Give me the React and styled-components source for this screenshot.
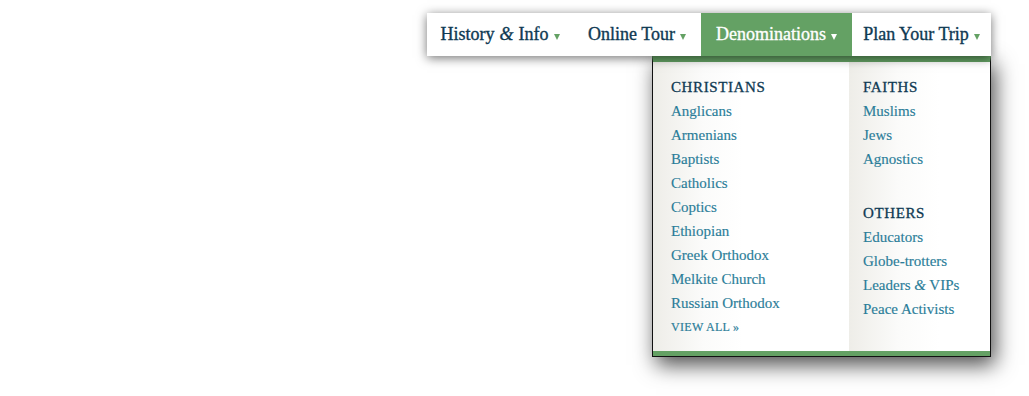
import React from "react";
import styled, { createGlobalStyle } from "styled-components";

const Global = createGlobalStyle`
  html, body { margin: 0; padding: 0; background: #fff; }
  body { font-family: "Liberation Serif", "DejaVu Serif", serif; }
  * { box-sizing: border-box; }
`;

const GREEN = "#64a164";
const NAVY = "#0f3a53";
const TEAL = "#2b7d99";

const Page = styled.div`
  display: flex;
  justify-content: flex-end;
  padding: 13px 38px 0 0;
  height: 396px;
`;

const MenuWrap = styled.div`
  position: relative;
  width: 564px;
`;

const Nav = styled.nav`
  position: relative;
  z-index: 2;
  display: flex;
  height: 43px;
  background: #fff;
  box-shadow: 0 2px 10px rgba(0, 0, 0, 0.55);
`;

const NavItem = styled.a`
  display: flex;
  align-items: center;
  justify-content: center;
  gap: 5px;
  width: ${(p) => p.$w}px;
  height: 100%;
  font-size: 18px;
  -webkit-text-stroke: 0.35px currentColor;
  color: ${(p) => (p.$active ? "#fff" : NAVY)};
  background: ${(p) => (p.$active ? GREEN : "transparent")};
  text-decoration: none;
  white-space: nowrap;
`;

const Amp = styled.span`
  font-style: italic;
`;

const Caret = styled.span`
  display: inline-block;
  width: 0;
  height: 0;
  margin-top: 5px;
  border-left: 3.5px solid transparent;
  border-right: 3.5px solid transparent;
  border-top: 6px solid ${(p) => (p.$light ? "#fff" : GREEN)};
`;

const Dropdown = styled.div`
  position: absolute;
  z-index: 1;
  top: 43px;
  right: 0;
  width: 339px;
  display: flex;
  border: 1px solid #111;
  border-top: 6px solid ${GREEN};
  box-shadow: 4px 8px 20px rgba(0, 0, 0, 0.7);
  background: #fff;

  &::after {
    content: "";
    position: absolute;
    left: 0;
    right: 0;
    bottom: 0;
    height: 5px;
    background: ${GREEN};
  }
`;

const Column = styled.div`
  width: ${(p) => p.$w}px;
  padding: 13px 0 17px ${(p) => p.$pl}px;
  background: linear-gradient(to right, #eeede8 0px, #fbfbfa 50px, #ffffff 90px);
`;

const Heading = styled.div`
  font-size: 15px;
  line-height: 24px;
  letter-spacing: 0.6px;
  -webkit-text-stroke: 0.3px currentColor;
  color: ${NAVY};
  margin-top: ${(p) => p.$mt || 0}px;
`;

const Link = styled.a`
  display: block;
  font-size: 15px;
  line-height: 24px;
  -webkit-text-stroke: 0.15px currentColor;
  color: ${TEAL};
  text-decoration: none;
`;

const ViewAll = styled.a`
  display: block;
  font-size: 12px;
  line-height: 24px;
  letter-spacing: 0.3px;
  -webkit-text-stroke: 0.2px currentColor;
  color: ${TEAL};
  text-decoration: none;
`;

const christians = [
  "Anglicans",
  "Armenians",
  "Baptists",
  "Catholics",
  "Coptics",
  "Ethiopian",
  "Greek Orthodox",
  "Melkite Church",
  "Russian Orthodox",
];

export default function App() {
  return (
    <>
      <Global />
      <Page>
        <MenuWrap>
          <Nav>
            <NavItem $w={146}>
              History <Amp>&amp;</Amp> Info <Caret />
            </NavItem>
            <NavItem $w={128}>
              Online Tour <Caret />
            </NavItem>
            <NavItem $w={151} $active>
              Denominations <Caret $light />
            </NavItem>
            <NavItem $w={139}>
              Plan Your Trip <Caret />
            </NavItem>
          </Nav>
          <Dropdown>
            <Column $w={196} $pl={18}>
              <Heading>CHRISTIANS</Heading>
              {christians.map((c) => (
                <Link key={c}>{c}</Link>
              ))}
              <ViewAll>VIEW ALL »</ViewAll>
            </Column>
            <Column $w={141} $pl={14}>
              <Heading>FAITHS</Heading>
              <Link>Muslims</Link>
              <Link>Jews</Link>
              <Link>Agnostics</Link>
              <Heading $mt={30}>OTHERS</Heading>
              <Link>Educators</Link>
              <Link>Globe-trotters</Link>
              <Link>
                Leaders <Amp>&amp;</Amp> VIPs
              </Link>
              <Link>Peace Activists</Link>
            </Column>
          </Dropdown>
        </MenuWrap>
      </Page>
    </>
  );
}
